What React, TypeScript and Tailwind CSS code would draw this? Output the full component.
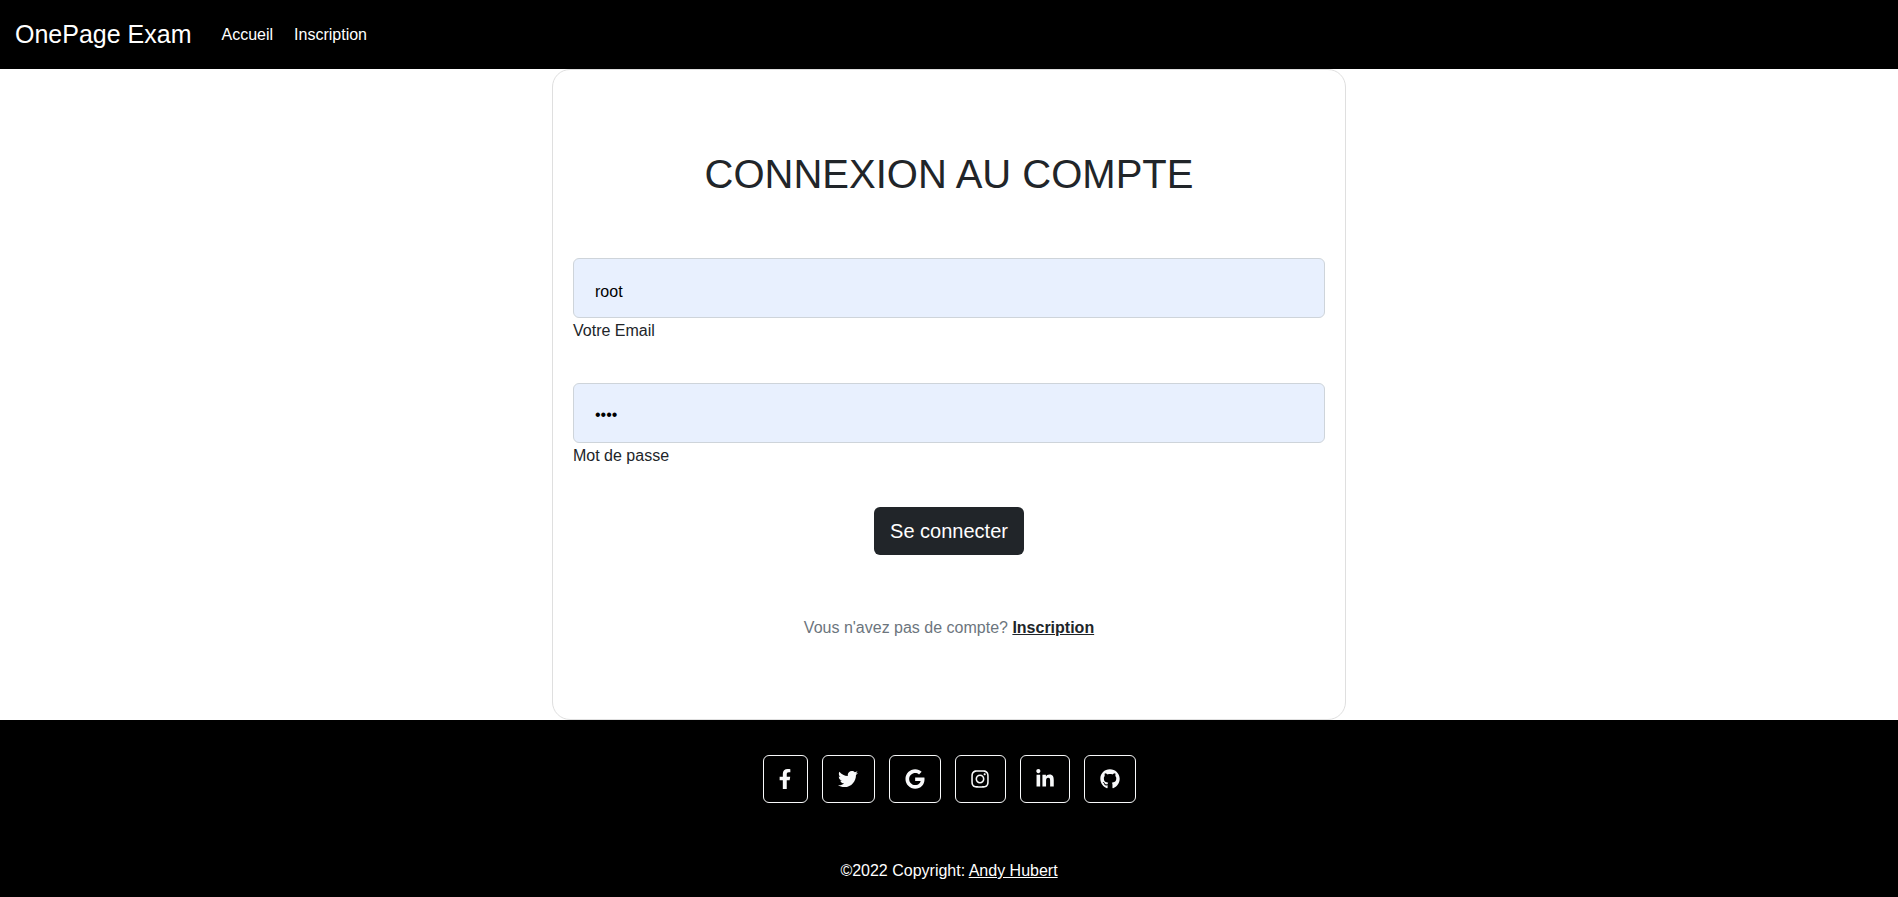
import React from "react";
import type { IconType } from "react-icons";
import {
  FaFacebookF,
  FaGithub,
  FaGoogle,
  FaInstagram,
  FaLinkedinIn,
  FaTwitter,
} from "react-icons/fa";

const socials: { name: string; Icon: IconType; width: string }[] = [
  { name: "Facebook", Icon: FaFacebookF, width: "w-[45px]" },
  { name: "Twitter", Icon: FaTwitter, width: "w-[53px]" },
  { name: "Google", Icon: FaGoogle, width: "w-[52px]" },
  { name: "Instagram", Icon: FaInstagram, width: "w-[51px]" },
  { name: "LinkedIn", Icon: FaLinkedinIn, width: "w-[50px]" },
  { name: "GitHub", Icon: FaGithub, width: "w-[52px]" },
];

function Navbar() {
  return (
    <nav className="flex h-[69px] items-center bg-black px-[15px] text-white">
      <a href="#" className="pb-0.5 text-[25px] leading-[38px]">
        OnePage Exam
      </a>
      <div className="ml-[30px] flex gap-[21px]">
        <a href="#">Accueil</a>
        <a href="#inscription">Inscription</a>
      </div>
    </nav>
  );
}

function Field({
  id,
  label,
  type,
  value,
}: {
  id: string;
  label: string;
  type: "text" | "password";
  value: string;
}) {
  return (
    <div className="flex flex-col gap-px">
      <input
        id={id}
        type={type}
        defaultValue={value}
        className={`h-[60px] w-full rounded-md border border-[#ced4da] bg-[#e8f0fe] px-[21px] text-base text-black outline-none ${
          type === "password" ? "pt-1" : "pt-2"
        }`}
      />
      <label htmlFor={id} className="self-start">
        {label}
      </label>
    </div>
  );
}

function LoginCard() {
  return (
    <section className="mx-auto w-full max-w-[794px] rounded-[18px] border border-[#dfdfdf] bg-white px-5 pt-20 pb-[79px] text-center">
      <h2 className="text-[40px] leading-[48px] uppercase">Connexion au compte</h2>
      <form
        className="mt-[60px] text-left"
        onSubmit={(event) => event.preventDefault()}
      >
        <div className="flex flex-col gap-10">
          <Field id="email" label="Votre Email" type="text" value="root" />
          <Field id="password" label="Mot de passe" type="password" value="root" />
        </div>
        <div className="mt-[39px] flex justify-center">
          <button
            type="submit"
            className="h-12 rounded-md bg-[#212529] px-4 text-xl text-white"
          >
            Se connecter
          </button>
        </div>
      </form>
      <p className="mt-[61px] text-[#6c757d]">
        Vous n'avez pas de compte?{" "}
        <a href="#inscription" className="font-bold text-[#212529] underline">
          Inscription
        </a>
      </p>
    </section>
  );
}

function Footer() {
  return (
    <footer className="grow bg-black pt-[35px] pb-[15px] text-center text-white">
      <div className="flex justify-center gap-[14px]">
        {socials.map(({ name, Icon, width }) => (
          <a
            key={name}
            href="#"
            aria-label={name}
            className={`${width} flex h-12 items-center justify-center rounded-md border border-[#f8f9fa] text-[#f8f9fa]`}
          >
            <Icon className="size-5 shrink-0" />
          </a>
        ))}
      </div>
      <p className="mt-14">
        ©2022 Copyright:{" "}
        <a href="#" className="underline">
          Andy Hubert
        </a>
      </p>
    </footer>
  );
}

export default function App() {
  return (
    <div className="flex min-h-screen flex-col bg-white font-['Liberation_Sans',Arial,sans-serif] text-base text-[#212529]">
      <Navbar />
      <main>
        <LoginCard />
      </main>
      <Footer />
    </div>
  );
}
